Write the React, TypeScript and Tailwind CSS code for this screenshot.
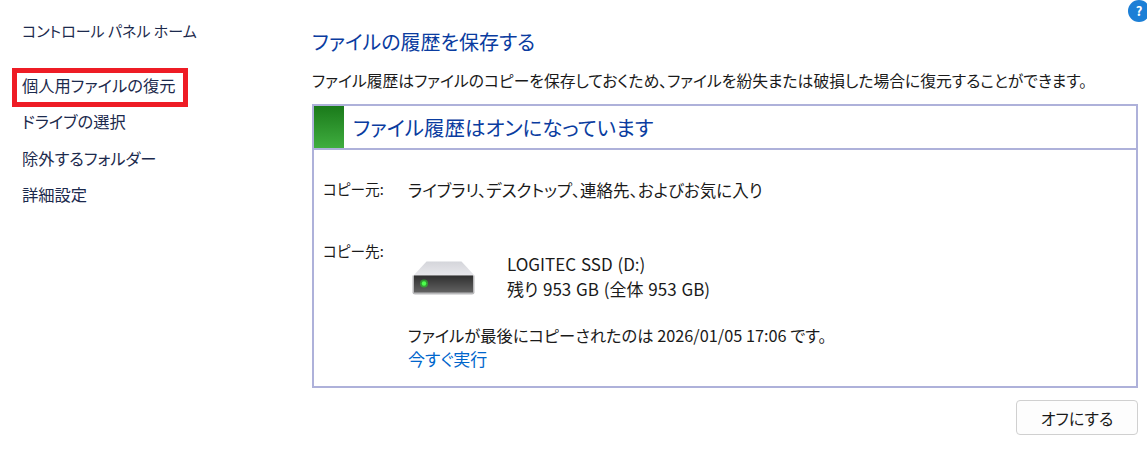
import React from "react";

const navItems = ["個人用ファイルの復元", "ドライブの選択", "除外するフォルダー", "詳細設定"];

function DriveIcon() {
  return (
    <svg width="66" height="36" viewBox="0 0 66 36" className="shrink-0">
      <defs>
        <linearGradient id="driveTop" x1="0" y1="0" x2="0" y2="1">
          <stop offset="0" stopColor="#d4d5da" />
          <stop offset="1" stopColor="#e8e8ec" />
        </linearGradient>
        <linearGradient id="driveFront" x1="0" y1="0" x2="0" y2="1">
          <stop offset="0" stopColor="#2f2f2f" />
          <stop offset="1" stopColor="#626262" />
        </linearGradient>
      </defs>
      <path d="M14.500 0.500H49.500L62.500 14.500H1.500Z" fill="url(#driveTop)" />
      <path d="M0.500 14.500H62.500V31.500Q62.500 33.500 60 33.500H3Q0.500 33.500 0.500 31.500Z" fill="#b9b9bb" />
      <rect x="2" y="14.500" width="59" height="17" fill="url(#driveFront)" />
      <circle cx="12" cy="22.500" r="4" fill="#22e022" opacity="0.55" />
      <circle cx="12" cy="22.500" r="2.200" fill="#4dff4d" />
    </svg>
  );
}

export default function App() {
  return (
    <div className="relative flex h-[467px] w-[1147px] overflow-hidden bg-white font-['Noto_Sans_CJK_JP','Noto_Sans',sans-serif] text-[16.5px] text-[#1a1a1a] [font-feature-settings:'palt']">
      <aside className="w-[312px] shrink-0 pl-[22px] pt-[20px]">
        <div className="text-[15px] text-[#1c2a4d]">コントロール パネル ホーム</div>
        <ul className="mt-[31px] flex flex-col gap-[14.600px] text-[16.300px] text-[#1c2a4d]">
          {navItems.map((item) => (
            <li key={item} className="h-[22px] leading-[22px]">
              {item}
            </li>
          ))}
        </ul>
      </aside>

      <main className="w-[826px] shrink-0 pt-[27px]">
        <h1 className="text-[20px] font-normal leading-[30px] text-[#0a3ca0]">ファイルの履歴を保存する</h1>
        <p className="mt-[12px] text-[15.800px] leading-[24px]">
          ファイル履歴はファイルのコピーを保存しておくため、ファイルを紛失または破損した場合に復元することができます。
        </p>

        <section className="mt-[11px] h-[284px] border-2 border-[#aeb1da]">
          <div className="flex h-[44px] items-center border-b-2 border-[#aeb1da]">
            <div className="h-full w-[30px] bg-gradient-to-b from-[#1a7a1a] to-[#3fae3f]" />
            <h2 className="ml-[9px] pt-[1px] text-[20.500px] font-normal text-[#0a3ca0]">ファイル履歴はオンになっています</h2>
          </div>

          <div className="flex pl-[9px] pt-[28px]">
            <div className="w-[85px] shrink-0 text-[14.700px]">コピー元:</div>
            <div>ライブラリ、デスクトップ、連絡先、およびお気に入り</div>
          </div>

          <div className="mt-[37px] flex pl-[9px]">
            <div className="w-[85px] shrink-0 text-[14.700px]">コピー先:</div>
            <div>
              <div className="flex items-start">
                <div className="pl-[4px] pt-[21px]">
                  <DriveIcon />
                </div>
                <div className="ml-[29px] pt-[11px] text-[17px] leading-[25px] [word-spacing:1px]">
                  <div>LOGITEC SSD (D:)</div>
                  <div>残り 953 GB (全体 953 GB)</div>
                </div>
              </div>
              <div className="mt-[22px] text-[16.300px] leading-[24px]">ファイルが最後にコピーされたのは 2026/01/05 17:06 です。</div>
              <a className="block text-[17px] leading-[24px] text-[#0066cc]">今すぐ実行</a>
            </div>
          </div>
        </section>

        <div className="mt-[12px] flex justify-end">
          <button className="h-[35px] w-[122px] rounded-[4px] border border-[#d0d0d0] bg-[#fdfdfd] text-[16px] text-[#1a1a1a]">
            オフにする
          </button>
        </div>
      </main>

      {/* help button at the window corner */}
      <div className="absolute left-[1128px] top-0 flex h-[22px] w-[22px] items-center justify-center rounded-full bg-[#1c7fd6] text-[13px] font-bold text-white">
        ?
      </div>

      {/* red annotation box */}
      <div className="absolute left-[12px] top-[68px] h-[39px] w-[176px] border-[5px] border-[#ee1c25]" />
    </div>
  );
}
